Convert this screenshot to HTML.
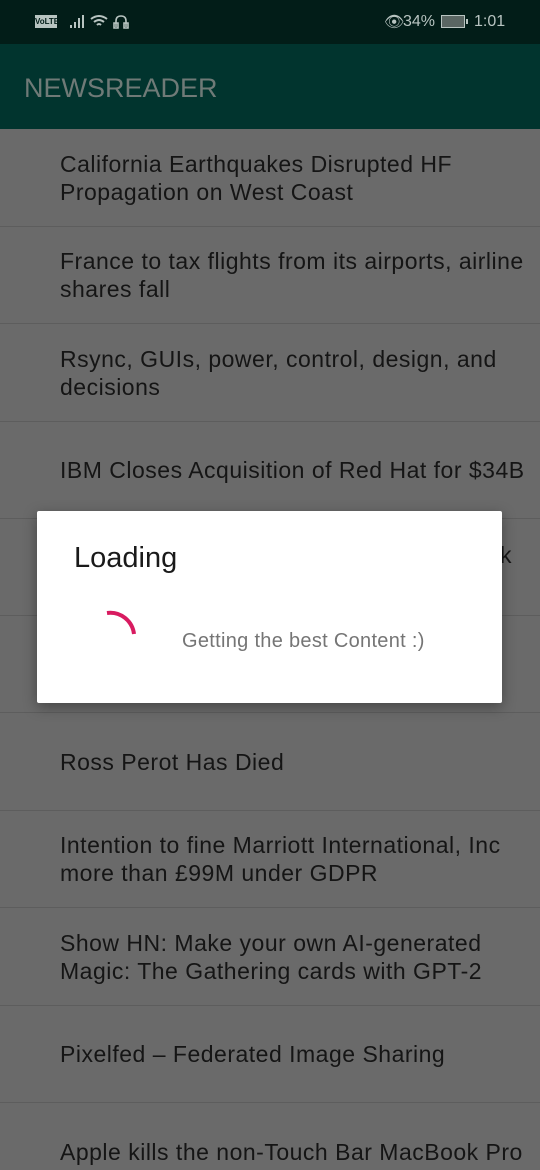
<!DOCTYPE html>
<html style="overflow:hidden;height:1170px"><head><meta charset="utf-8"><style>
*{margin:0;padding:0;box-sizing:border-box}
body{width:540px;height:1170px;overflow:hidden;background:#6a6a6a;font-family:"Liberation Sans",sans-serif;position:relative}
.sb{position:absolute;left:0;top:0;width:540px;height:44px;background:#021d18;color:#b8c4c1;font-size:16px}
.hdr{position:absolute;left:0;top:44px;width:540px;height:85px;background:#01342e;}
.hdr span{position:absolute;left:24px;top:29px;font-size:27px;color:#6f7a77}
.row{position:absolute;left:0;width:540px;border-bottom:1.5px solid #5d5d5d;display:flex;align-items:center;padding-left:60px;padding-right:12px;font-size:23px;letter-spacing:0.5px;line-height:28px;color:#151515}
.dlg{position:absolute;left:37px;top:511px;width:465px;height:192px;background:#fff;border-radius:2px;box-shadow:0 4px 14px rgba(0,0,0,.35)}
</style></head><body>
<div class="sb">
<span style="position:absolute;left:35px;top:15px;width:22px;height:13px;background:#b8c4c1;color:#021d18;font-size:8px;font-weight:bold;line-height:13px;text-align:center">VoLTE</span>
<svg style="position:absolute;left:70px;top:13px" width="60" height="18"><rect x="0" y="12" width="2" height="3" fill="#b8c4c1"/><rect x="4" y="9" width="2" height="6" fill="#b8c4c1"/><rect x="8" y="5" width="2" height="10" fill="#b8c4c1"/><rect x="12" y="2" width="2" height="13" fill="#b8c4c1"/><path d="M21 6 Q29 0 37 6 M24 9 Q29 5 34 9 M27 12 Q29 10 31 12" stroke="#b8c4c1" stroke-width="2" fill="none"/><path d="M46 14 V8 Q46 3 51 3 Q56 3 56 8 V14 M44 10h4v5h-4z M54 10h4v5h-4z" stroke="#b8c4c1" stroke-width="1.6" fill="none"/></svg>
<span style="position:absolute;left:384px;top:12px">👁</span>
<span style="position:absolute;left:403px;top:13px">34%</span>
<span style="position:absolute;left:441px;top:15px;width:24px;height:13px;border:1.5px solid #b8c4c1;background:#5a6663"></span>
<span style="position:absolute;left:466px;top:19px;width:2px;height:5px;background:#b8c4c1"></span>
<span style="position:absolute;left:474px;top:13px">1:01</span>
</div>
<div class="hdr"><span>NEWSREADER</span></div>
<div class="row" style="top:129px;height:98px">California Earthquakes Disrupted HF Propagation on West Coast</div>
<div class="row" style="top:227px;height:97px">France to tax flights from its airports, airline shares fall</div>
<div class="row" style="top:324px;height:98px">Rsync, GUIs, power, control, design, and decisions</div>
<div class="row" style="top:422px;height:97px">IBM Closes Acquisition of Red Hat for $34B</div>
<div class="row" style="top:519px;height:97px">&nbsp;<span style="position:absolute;left:500px;top:22px">k</span></div>
<div class="row" style="top:616px;height:97px"></div>
<div class="row" style="top:713px;height:98px">Ross Perot Has Died</div>
<div class="row" style="top:811px;height:97px">Intention to fine Marriott International, Inc more than £99M under GDPR</div>
<div class="row" style="top:908px;height:98px">Show HN: Make your own AI-generated Magic: The Gathering cards with GPT-2</div>
<div class="row" style="top:1006px;height:97px">Pixelfed – Federated Image Sharing</div>
<div class="row" style="top:1103px;height:98px;border:none">Apple kills the non-Touch Bar MacBook Pro</div>
<div class="dlg">
<div style="position:absolute;left:37px;top:31px;font-size:29px;color:#1a1a1a">Loading</div>
<div style="position:absolute;left:145px;top:119px;font-size:20px;letter-spacing:0.3px;color:#757575">Getting the best Content :)</div>
</div>
<svg style="position:absolute;left:0;top:0" width="540" height="700"><path d="M107 613 A24 24 0 0 1 134 634" stroke="#d81b60" stroke-width="4" fill="none"/></svg>
</body></html>
